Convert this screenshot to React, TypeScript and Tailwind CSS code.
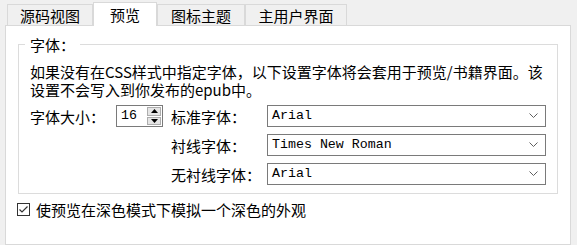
import React from "react";

const cjk = "font-['Noto_Sans_CJK_SC',sans-serif]";
const mono = "font-['Liberation_Mono','Noto_Sans_CJK_SC',monospace]";

function Chevron() {
  return (
    <svg width="9" height="6" viewBox="0 0 9 6" className="shrink-0">
      <polyline points="0.5,0.5 4.5,4.5 8.5,0.5" fill="none" stroke="#606060" strokeWidth="1" />
    </svg>
  );
}

function Combo({ value }: { value: string }) {
  return (
    <div className="flex h-[22px] w-[279px] items-center justify-between border border-[#7a7a7a] bg-white pl-[4px] pr-[7px]">
      <span className={`${mono} text-[13.3px] leading-none text-black`}>{value}</span>
      <Chevron />
    </div>
  );
}

function SpinBox({ value }: { value: string }) {
  return (
    <div className="flex h-[22px] w-[47px] items-center justify-between border border-[#7a7a7a] bg-white pl-[4px] pr-[1px]">
      <span className={`${mono} text-[13.3px] leading-none text-black`}>{value}</span>
      <div className="flex h-[18px] w-[14px] flex-col gap-px">
        <div className="flex flex-1 items-center justify-center border border-[#adadad] bg-[#e5e5e5]">
          <svg width="7" height="4" viewBox="0 0 7 4">
            <polygon points="3.5,0 7,4 0,4" fill="#000" />
          </svg>
        </div>
        <div className="flex flex-1 items-center justify-center border border-[#adadad] bg-[#e5e5e5]">
          <svg width="7" height="4" viewBox="0 0 7 4">
            <polygon points="0,0 7,0 3.5,4" fill="#000" />
          </svg>
        </div>
      </div>
    </div>
  );
}

const tabs = [
  { label: "源码视图", w: "w-[86px]" },
  { label: "预览", w: "w-[64px]", active: true },
  { label: "图标主题", w: "w-[88px]" },
  { label: "主用户界面", w: "w-[102px]" },
];

export default function App() {
  return (
    <div className={`${cjk} flex h-[245px] w-[577px] flex-col overflow-hidden bg-[#f0f0f0] pl-[5px] pr-[6px] pt-[2px] text-[15px] text-black`}>
      <div className="relative z-10 flex h-[23px] items-end pl-[2px]">
        {tabs.map((t) =>
          t.active ? (
            <div
              key={t.label}
              className={`${t.w} -mb-px flex h-[24px] items-center justify-center border border-b-0 border-[#d9d9d9] bg-white leading-[17px]`}
            >
              {t.label}
            </div>
          ) : (
            <div
              key={t.label}
              className={`${t.w} flex h-[21px] items-center justify-center border border-b-0 border-[#d9d9d9] bg-[#f0f0f0] leading-[17px]`}
            >
              {t.label}
            </div>
          )
        )}
      </div>
      <div className="flex-1 border border-[#d9d9d9] bg-white">
        <fieldset className="ml-[12px] mt-[10px] w-[540px] border border-[#dcdcdc] px-[11px] pb-[8px]">
          <legend className="-ml-[5px] px-[5px] leading-[17px]">字体：</legend>
          <div className="mt-[10px] flex flex-col">
            <div className="h-[18px] leading-[18px]">如果没有在CSS样式中指定字体，以下设置字体将会套用于预览/书籍界面。该</div>
            <div className="h-[18px] leading-[18px]">设置不会写入到你发布的epub中。</div>
          </div>
          <div className="mt-[6px] grid grid-cols-[86px_55px_96px_279px] items-center gap-y-[7px] leading-[17px]">
            <span>字体大小：</span>
            <SpinBox value="16" />
            <span>标准字体：</span>
            <Combo value="Arial" />
            <span />
            <span />
            <span>衬线字体：</span>
            <Combo value="Times New Roman" />
            <span />
            <span />
            <span>无衬线字体：</span>
            <Combo value="Arial" />
          </div>
        </fieldset>
        <label className="ml-[11px] mt-[7px] flex items-center gap-[6px] leading-[17px]">
          <span className="flex h-[13px] w-[13px] items-center justify-center border border-[#333333] bg-white">
            <svg width="9" height="7" viewBox="0 0 9 7">
              <polyline points="0.5,3.5 3,6 8.5,0.5" fill="none" stroke="#333333" strokeWidth="1.2" />
            </svg>
          </span>
          <span>使预览在深色模式下模拟一个深色的外观</span>
        </label>
      </div>
    </div>
  );
}
